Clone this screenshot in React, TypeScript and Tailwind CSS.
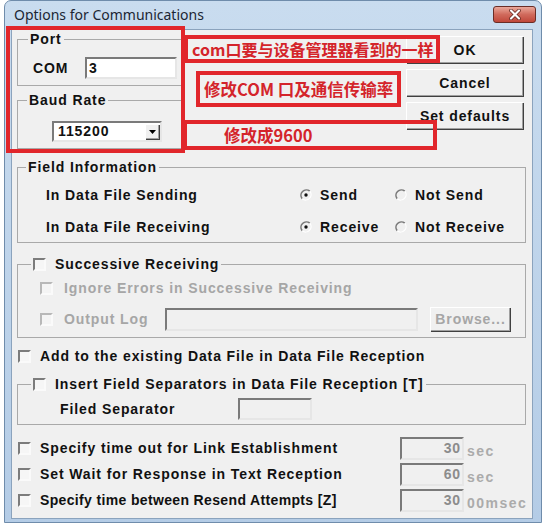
import React from "react";

function Check({ disabled }: { disabled?: boolean }) {
  return (
    <span
      className={
        disabled
          ? "inline-block w-[13px] h-[13px] shrink-0 border-2 border-t-[#b8b8b8] border-l-[#b8b8b8] border-b-[#fafafa] border-r-[#fafafa] bg-[#f4f4f4]"
          : "inline-block w-[13px] h-[13px] shrink-0 border-2 border-t-[#7c7c7c] border-l-[#7c7c7c] border-b-[#fafafa] border-r-[#fafafa] bg-[#f6f6f6]"
      }
    />
  );
}

function Radio({ checked }: { checked?: boolean }) {
  return (
    <svg width="12" height="12" viewBox="0 0 12 12" className="shrink-0">
      <path d="M2.2 9.8 A5.4 5.4 0 0 1 9.8 2.2" fill="none" stroke="#7a7a7a" strokeWidth="1.6" />
      <path d="M9.8 2.2 A5.4 5.4 0 0 1 2.2 9.8" fill="none" stroke="#ffffff" strokeWidth="1.2" />
      {checked && <circle cx="6" cy="6" r="1.7" fill="#111111" />}
    </svg>
  );
}

function Btn({ children, className = "" }: { children: React.ReactNode; className?: string }) {
  return (
    <div
      className={
        "flex items-center justify-center shrink-0 bg-[#f0f0f0] border-t border-l border-t-white border-l-white shadow-[inset_-1px_-1px_0_#a0a0a0,1px_1px_0_#404040] " +
        className
      }
    >
      {children}
    </div>
  );
}

const sunken =
  "shrink-0 border-2 border-t-[#7a7a7a] border-l-[#7a7a7a] border-b-[#e6e6e6] border-r-[#e6e6e6]";

export default function App() {
  return (
    <div className="relative w-[545px] h-[525px] overflow-hidden bg-white font-['Liberation_Sans',Arial,sans-serif] text-[14px] font-bold tracking-[0.9px] text-[#111] whitespace-nowrap">
      {/* window frame */}
      <div className="ml-[4px] w-[538px] h-[523px] flex flex-col rounded-t-[7px] border border-[#6f8cab] bg-gradient-to-b from-[#c9dcef] to-[#b4cce6]">
        {/* title bar */}
        <div className="h-[28px] flex items-start justify-between pl-[9px] pr-[5px]">
          <span className="mt-[5px] font-['Noto_Sans',sans-serif] font-normal tracking-normal text-[14px] leading-[18px] text-[#1b2633]">
            Options for Communications
          </span>
          <div className="mt-[5px] w-[43px] h-[17px] rounded-[3px] border border-[#6a2d26] bg-gradient-to-b from-[#e9a89b] via-[#d06a5c] to-[#c0473a] flex items-center justify-center">
            <svg width="14" height="11" viewBox="0 0 14 11">
              <path d="M3 1.5 L11 9.5 M11 1.5 L3 9.5" stroke="#5a2019" strokeWidth="3.6" strokeLinecap="round" />
              <path d="M3 1.5 L11 9.5 M11 1.5 L3 9.5" stroke="#ffffff" strokeWidth="2.2" strokeLinecap="round" />
            </svg>
          </div>
        </div>
        {/* client */}
        <div className="ml-[6px] mr-[8px] mb-[3px] flex-1 border border-[#8ba3bd] bg-[#f0f0f0] flex flex-col">
          {/* top section */}
          <div className="flex pl-[5px]">
            <div className="w-[165px] pt-[1px] flex flex-col">
              <fieldset className="border border-[#a9a9a9] pb-[6px]">
                <legend className="ml-[10px] px-[2px] leading-[16px]">Port</legend>
                <div className="mt-[10px] pl-[15px] flex items-center">
                  <span className="w-[52px]">COM</span>
                  <div className={"w-[92px] h-[22px] bg-white flex items-center pl-[2px] " + sunken}>3</div>
                </div>
              </fieldset>
              <fieldset className="mt-[6px] border border-[#a9a9a9] pb-[6px]">
                <legend className="ml-[9px] px-[2px] leading-[16px]">Baud Rate</legend>
                <div className="mt-[13px] pl-[34px]">
                  <div className={"w-[110px] h-[21px] bg-white flex items-center justify-between pl-[4px] pr-[1px] " + sunken}>
                    <span>115200</span>
                    <Btn className="w-[14px] h-[15px]">
                      <svg width="7" height="4" viewBox="0 0 7 4">
                        <path d="M0 0 H7 L3.5 4 Z" fill="#000" />
                      </svg>
                    </Btn>
                  </div>
                </div>
              </fieldset>
            </div>
            <div className="ml-[224px] pt-[6px] flex flex-col gap-[6px]">
              <Btn className="w-[117px] h-[27px]">OK</Btn>
              <Btn className="w-[117px] h-[27px]">Cancel</Btn>
              <Btn className="w-[117px] h-[27px]">Set defaults</Btn>
            </div>
          </div>

          {/* Field information */}
          <fieldset className="mt-[10px] ml-[5px] w-[509px] border border-[#a9a9a9] pb-[5px]">
            <legend className="ml-[8px] px-[2px] leading-[16px]">Field Information</legend>
            <div className="mt-[10px] flex flex-col gap-[12px] pl-[28px]">
              <div className="h-[20px] flex items-center">
                <span className="w-[254px]">In Data File Sending</span>
                <span className="w-[95px] flex items-center gap-[8px]"><Radio checked />Send</span>
                <span className="flex items-center gap-[8px]"><Radio />Not Send</span>
              </div>
              <div className="h-[20px] flex items-center">
                <span className="w-[254px]">In Data File Receiving</span>
                <span className="w-[95px] flex items-center gap-[8px]"><Radio checked />Receive</span>
                <span className="flex items-center gap-[8px]"><Radio />Not Receive</span>
              </div>
            </div>
          </fieldset>

          {/* Successive receiving */}
          <fieldset className="mt-[13px] ml-[5px] w-[509px] border border-[#a9a9a9] pb-[6px]">
            <legend className="ml-[13px] px-[2px] leading-[16px]">
              <span className="flex items-center gap-[9px]"><Check />Successive Receiving</span>
            </legend>
            <div className="mt-[6px] pl-[22px] flex flex-col gap-[9px] text-[#a6a6a6]">
              <div className="h-[20px] flex items-center gap-[11px]"><Check disabled />Ignore Errors in Successive Receiving</div>
              <div className="h-[24px] flex items-center">
                <span className="w-[125px] shrink-0 flex items-center gap-[11px]"><Check disabled />Output Log</span>
                <div className={"w-[253px] h-[23px] bg-[#f0f0f0] " + sunken} />
                <Btn className="ml-[12px] w-[80px] h-[24px] text-[#a6a6a6]">Browse...</Btn>
              </div>
            </div>
          </fieldset>

          {/* add to existing */}
          <div className="mt-[8px] ml-[6px] h-[20px] flex items-center gap-[9px]"><Check />Add to the existing Data File in Data File Reception</div>

          {/* insert field separators */}
          <fieldset className="mt-[10px] ml-[5px] w-[509px] border border-[#a9a9a9] pb-[4px]">
            <legend className="ml-[13px] px-[2px] leading-[16px]">
              <span className="flex items-center gap-[9px]"><Check />Insert Field Separators in Data File Reception [T]</span>
            </legend>
            <div className="mt-[6px] pl-[42px] flex items-center">
              <span className="w-[178px] shrink-0">Filed Separator</span>
              <div className={"w-[74px] h-[22px] bg-[#f0f0f0] " + sunken} />
            </div>
          </fieldset>

          {/* time rows */}
          <div className="mt-[12px] ml-[6px] flex flex-col gap-[3px]">
            {[
              ["Specify time out for Link Establishment", "30", "sec", "tracking-[0.9px]"],
              ["Set Wait for Response in Text Reception", "60", "sec", "tracking-[0.9px]"],
              ["Specify time between Resend Attempts [Z]", "30", "00msec", "tracking-[0.35px]"],
            ].map(([label, val, unit, tr]) => (
              <div key={label} className="h-[23px] flex items-center">
                <span className={"w-[382px] shrink-0 flex items-center gap-[9px] " + tr}><Check />{label}</span>
                <div className={"w-[64px] h-[23px] bg-[#f0f0f0] flex items-center justify-end pr-[1px] text-[#8c8c8c] " + sunken}>{val}</div>
                <span className="ml-[3px] mt-[5px] text-[14px] text-[#ababab] tracking-[1.5px]">{unit}</span>
              </div>
            ))}
          </div>
        </div>
      </div>

      {/* red annotations */}
      <div className="absolute left-[6px] top-[26px] w-[179px] h-[127px] border-4 border-[#e1262b]" />
      <div className="absolute left-[184px] top-[35px] w-[256px] h-[28px] border-4 border-[#e1262b] flex items-center pl-[4px] font-['Noto_Sans_CJK_SC',sans-serif] text-[16px] tracking-normal text-[#d4242a]">
        com口要与设备管理器看到的一样
      </div>
      <div className="absolute left-[196px] top-[71px] w-[205px] h-[36px] border-4 border-[#e1262b] flex items-center pl-[4px] font-['Noto_Sans_CJK_SC',sans-serif] text-[16.5px] tracking-normal text-[#d4242a]">
        修改COM 口及通信传输率
      </div>
      <div className="absolute left-[183px] top-[120px] w-[254px] h-[30px] border-4 border-[#e1262b] flex items-center pl-[37px] font-['Noto_Sans_CJK_SC',sans-serif] text-[16.5px] tracking-normal text-[#d4242a]">
        修改成9600
      </div>
    </div>
  );
}
